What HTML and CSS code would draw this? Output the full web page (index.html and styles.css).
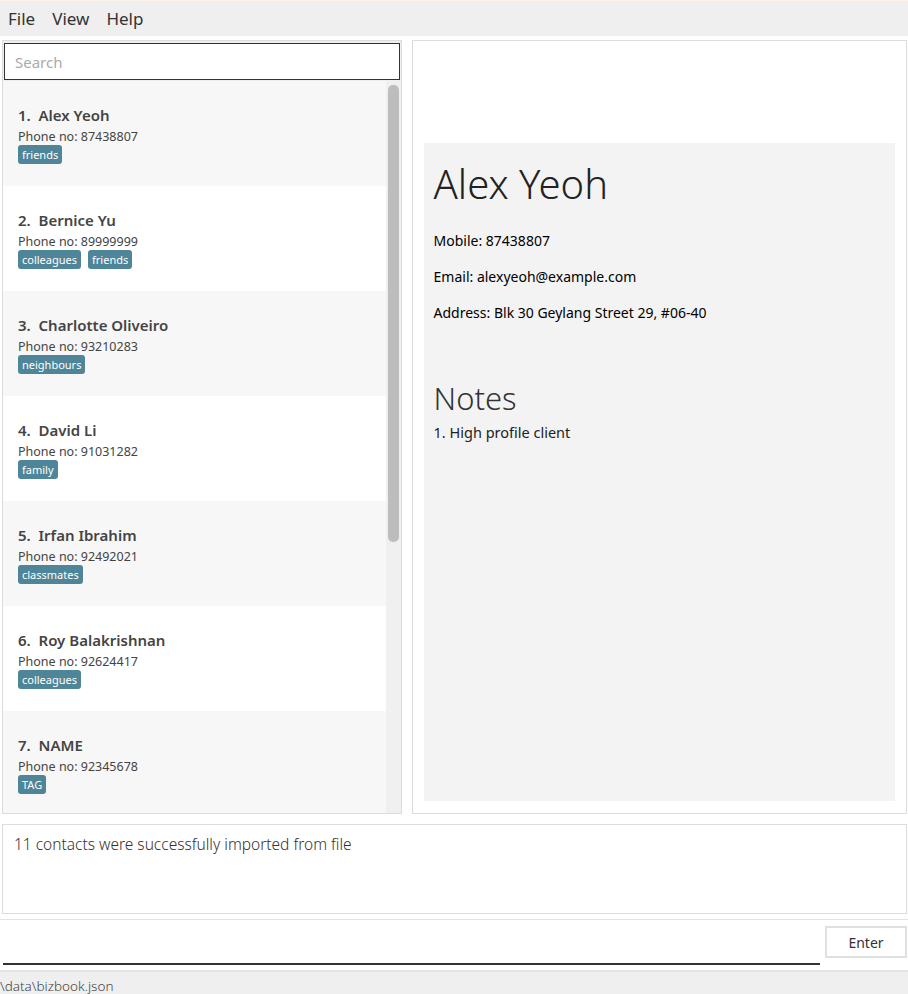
FILE: index.html
```html
<!DOCTYPE html>
<html>
<head>
<meta charset="utf-8">
<link rel="stylesheet" href="styles.css">
</head>
<body>
<div class="menubar">
  <span class="menu">File</span>
  <span class="menu">View</span>
  <span class="menu">Help</span>
</div>
<div class="main">
  <div class="left">
    <div class="search">Search</div>
    <div class="listwrap">
      <div class="list">
        <div class="card odd">
          <div class="name">1.&nbsp; Alex Yeoh</div>
          <div class="phone">Phone no: 87438807</div>
          <div class="tags"><span class="tag">friends</span></div>
        </div>
        <div class="card">
          <div class="name">2.&nbsp; Bernice Yu</div>
          <div class="phone">Phone no: 89999999</div>
          <div class="tags"><span class="tag">colleagues</span><span class="tag">friends</span></div>
        </div>
        <div class="card odd">
          <div class="name">3.&nbsp; Charlotte Oliveiro</div>
          <div class="phone">Phone no: 93210283</div>
          <div class="tags"><span class="tag">neighbours</span></div>
        </div>
        <div class="card">
          <div class="name">4.&nbsp; David Li</div>
          <div class="phone">Phone no: 91031282</div>
          <div class="tags"><span class="tag">family</span></div>
        </div>
        <div class="card odd">
          <div class="name">5.&nbsp; Irfan Ibrahim</div>
          <div class="phone">Phone no: 92492021</div>
          <div class="tags"><span class="tag">classmates</span></div>
        </div>
        <div class="card">
          <div class="name">6.&nbsp; Roy Balakrishnan</div>
          <div class="phone">Phone no: 92624417</div>
          <div class="tags"><span class="tag">colleagues</span></div>
        </div>
        <div class="card odd">
          <div class="name">7.&nbsp; NAME</div>
          <div class="phone">Phone no: 92345678</div>
          <div class="tags"><span class="tag">TAG</span></div>
        </div>
      </div>
      <div class="scrollbar"><div class="thumb"></div></div>
    </div>
  </div>
  <div class="right">
    <div class="detail">
      <div class="dname">Alex Yeoh</div>
      <div class="field">Mobile: 87438807</div>
      <div class="field">Email: alexyeoh@example.com</div>
      <div class="field">Address: Blk 30 Geylang Street 29, #06-40</div>
      <div class="notes-h">Notes</div>
      <div class="note">1. High profile client</div>
    </div>
  </div>
</div>
<div class="result">11 contacts were successfully imported from file</div>
<div class="command">
  <div class="input"></div>
  <div class="enter">Enter</div>
</div>
<div class="status">\data\bizbook.json</div>
</body>
</html>
```
FILE: styles.css
```css
* { box-sizing: border-box; }
html, body { margin: 0; padding: 0; background: #fff; }
body {
  font-family: "Noto Sans", "Open Sans", sans-serif;
  color: #333;
  width: 908px;
  height: 994px;
  overflow: hidden;
}
.menubar {
  height: 36px;
  background: #efefef;
  border-top: 1px solid #fbf4e6;
  display: flex;
  align-items: center;
  padding-left: 8px;
  gap: 17px;
  font-size: 17px;
  color: #333;
}
.main {
  display: flex;
  gap: 10px;
  padding: 4px 1px 0 2px;
  height: 778px;
}
.left {
  width: 400px;
  height: 774px;
  border: 1px solid #dcdcdc;
  background: #efefef;
  display: flex;
  flex-direction: column;
}
.search {
  margin: 2px 1px 1px 1px;
  height: 37px;
  border: 1px solid #333;
  background: #fff;
  color: #aaa;
  font-size: 15px;
  padding-left: 10px;
  display: flex;
  align-items: center;
}
.listwrap {
  flex: 1;
  display: flex;
  overflow: hidden;
}
.list {
  width: 383px;
}
.card {
  height: 105px;
  background: #fff;
  padding: 24px 0 0 15px;
  color: #444;
}
.card.odd { background: #f7f7f7; }
.name {
  font-size: 15px;
  font-weight: 600;
  line-height: 20px;
  color: #444;
}
.phone {
  font-size: 12.5px;
  line-height: 17px;
  margin-top: 3px;
  color: #444;
}
.tags { display: flex; gap: 7px; }
.tag {
  background: #4e8598;
  color: #fff;
  font-size: 11px;
  line-height: 19px;
  height: 19px;
  padding: 0 4px;
  border-radius: 3px;
}
.scrollbar {
  width: 14px;
  background: #f0f0f0;
  padding: 4px 1px 0 2px;
}
.thumb {
  height: 457px;
  background: #bdbdbd;
  border-radius: 5px;
}
.right {
  width: 496px;
  height: 774px;
  border: 1px solid #dcdcdc;
  background: #fff;
  padding: 102px 11px 11px 11px;
}
.detail {
  height: 658px;
  background: #f3f3f3;
  padding: 14px 10px;
  color: #111;
}
.dname {
  font-size: 40px;
  font-weight: 300;
  line-height: 54px;
  color: #222;
  margin-bottom: 20px;
}
.field {
  font-size: 14px;
  line-height: 20px;
  margin-bottom: 16px;
  color: #000;
}
.notes-h {
  font-size: 31px;
  font-weight: 300;
  line-height: 40px;
  margin-top: 55px;
  color: #333;
}
.note {
  font-size: 14.5px;
  line-height: 20px;
  margin-top: 4px;
  color: #222;
}
.result {
  margin: 10px 1px 0 2px;
  height: 90px;
  border: 1px solid #dcdcdc;
  padding: 8px 11px;
  font-size: 15.5px;
  font-weight: 300;
  color: #333;
}
.command {
  margin-top: 5px;
  border-top: 1px solid #e3e3e3;
  height: 51px;
  display: flex;
  align-items: flex-start;
  padding: 6px 1px 0 3px;
  gap: 5px;
}
.input {
  width: 817px;
  height: 39px;
  border-bottom: 2px solid #333;
}
.enter {
  width: 82px;
  height: 32px;
  border: 2px solid #e0e0e0;
  display: flex;
  align-items: center;
  justify-content: center;
  font-size: 14px;
  color: #333;
}
.status {
  height: 24px;
  background: #efefef;
  border-top: 2px solid #e3e3e3;
  font-size: 13.5px;
  font-weight: 300;
  color: #444;
  padding-top: 5px;
  line-height: 18px;
}
```
